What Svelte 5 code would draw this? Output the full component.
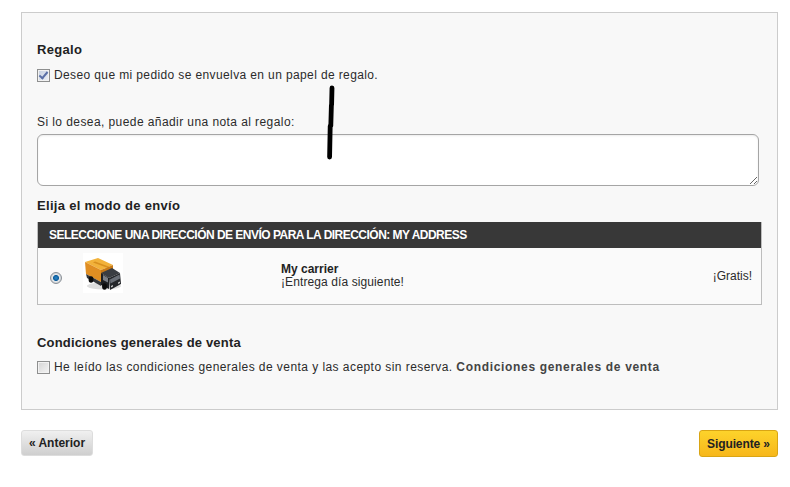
<script>
  const carrier = { name: 'My carrier', delay: '¡Entrega día siguiente!', price: '¡Gratis!' };
</script>

<div class="page">
  <div class="box">
    <h3 class="first">Regalo</h3>
    <label class="check">
      <input type="checkbox" checked />
      <span>Deseo que mi pedido se envuelva en un papel de regalo.</span>
    </label>

    <p class="note-label">Si lo desea, puede añadir una nota al regalo:</p>
    <textarea class="note"></textarea>

    <h3 class="mode">Elija el modo de envío</h3>
    <div class="carrier-table">
      <div class="carrier-head">SELECCIONE UNA DIRECCIÓN DE ENVÍO PARA LA DIRECCIÓN: MY ADDRESS</div>
      <div class="carrier-row">
        <input class="radio" type="radio" checked />
        <div class="truck">
          <svg width="40" height="40" viewBox="0 0 40 40">
            <rect width="40" height="40" fill="#fff" />
            <ellipse cx="21" cy="33" rx="17" ry="3.5" fill="#ddd" />
            <!-- caja -->
            <path d="M2 9 L15 5 L30 12 L18 17 Z" fill="#f2b23a" />
            <path d="M2 9 L18 17 L18 29 L3 21 Z" fill="#e08e22" />
            <path d="M10 9.5 L12 8.5 L27 14 L25 15 Z" fill="#d8901f" />
            <path d="M18 17 L30 12 L30 17 L18 22 Z" fill="#c87a18" />
            <!-- chasis -->
            <path d="M3 21 L18 29 L18 33 L4 25 Z" fill="#33363a" />
            <!-- cabina -->
            <path d="M18 20 L29 15 L37 20 L26 25 Z" fill="#3a3d42" />
            <path d="M18 20 L26 25 L26 36 L18 32 Z" fill="#1d1f22" />
            <path d="M26 25 L37 20 L38 31 L27 37 Z" fill="#25272b" />
            <path d="M27 26.5 L36.5 21.5 L37 25.5 L27.5 30.5 Z" fill="#6b7078" />
            <path d="M20 22 L25 25 L25 29.5 L20 27 Z" fill="#7a7f87" />
            <path d="M28 33 L30 32 L30 33.5 L28 34.5 Z M35 29.5 L37 28.5 L37 30 L35 31 Z" fill="#c9c9c9" />
            <ellipse cx="8" cy="26.5" rx="2.4" ry="3.2" fill="#0c0c0c" />
            <ellipse cx="21.5" cy="33.5" rx="2.4" ry="3.2" fill="#0c0c0c" />
          </svg>
        </div>
        <div class="carrier-info">
          <strong>{carrier.name}</strong>
          <span>{carrier.delay}</span>
        </div>
        <div class="price">{carrier.price}</div>
      </div>
    </div>

    <h3 class="terms">Condiciones generales de venta</h3>
    <label class="check">
      <input type="checkbox" />
      <span class="accept">He leído las condiciones generales de venta y las acepto sin reserva. <b>Condiciones generales de venta</b></span>
    </label>
  </div>

  <div class="nav">
    <button class="btn btn--prev">« Anterior</button>
    <button class="btn btn--next">Siguiente »</button>
  </div>

  <!-- trazo hecho a mano encima de la captura -->
  <svg class="scribble" width="12" height="78" viewBox="0 0 12 78">
    <path d="M7 3 L6.6 20 M6.4 20 L5.8 41 M5.2 41 L4.6 72" fill="none" stroke="#000" stroke-width="4.8" stroke-linecap="round" />
  </svg>
</div>

<style>
  :global(body) {
    margin: 0;
    background: #fff;
  }
  .page {
    position: relative;
    width: 790px;
    height: 487px;
    box-sizing: border-box;
    padding: 12px 12px 0 21px;
    font-family: "Liberation Sans", Arial, sans-serif;
    font-size: 12px;
    color: #2b2b2b;
    overflow: hidden;
  }
  .box {
    box-sizing: border-box;
    height: 398px;
    padding: 29px 15px 0 15px;
    background: #f8f8f8;
    border: 1px solid #ccc;
  }
  h3 {
    margin: 0;
    font-size: 13px;
    line-height: 15px;
    font-weight: bold;
    color: #222;
  }
  .first {
    letter-spacing: 0.3px;
  }
  .check {
    display: flex;
    align-items: center;
    gap: 4px;
    letter-spacing: 0.38px;
    line-height: 16px;
  }
  .check input {
    appearance: none;
    position: relative;
    box-sizing: border-box;
    width: 13px;
    height: 13px;
    margin: 0;
    background: linear-gradient(135deg, #d4d4d4, #f4f4f4);
    border: 1px solid #8e8f8f;
    outline: 1px solid #f2f2f2;
    outline-offset: -2px;
  }
  .check input:checked {
    background: linear-gradient(135deg, #c3cee0, #eef1f6);
  }
  .check input:checked::after {
    content: '';
    position: absolute;
    left: 3px;
    top: 0;
    width: 3px;
    height: 7px;
    border: solid #5a6fa6;
    border-width: 0 2px 2px 0;
    transform: rotate(40deg);
  }
  .accept {
    letter-spacing: 0.44px;
  }
  .check b {
    color: #444;
    letter-spacing: 0.67px;
  }
  .first + .check {
    margin-top: 10px;
  }
  .note-label {
    margin: 31px 0 0;
    line-height: 16px;
    letter-spacing: 0.42px;
  }
  .note {
    display: block;
    box-sizing: border-box;
    width: 722px;
    height: 52px;
    margin-top: 4px;
    background: #fff;
    border: 1px solid #a5a5a5;
    border-radius: 6px;
    box-shadow: inset 0 1px 2px rgba(0, 0, 0, 0.08);
  }
  .mode {
    margin-top: 12px;
    letter-spacing: 0.3px;
  }
  .carrier-table {
    width: 725px;
    margin-top: 9px;
    border: 1px solid #bdbdbd;
    border-top: 0;
    box-sizing: border-box;
  }
  .carrier-head {
    height: 26px;
    padding-left: 11px;
    background: #383838;
    color: #fff;
    font-weight: bold;
    font-size: 12px;
    line-height: 26px;
    letter-spacing: -0.52px;
    white-space: nowrap;
  }
  .carrier-row {
    display: flex;
    align-items: center;
    height: 56px;
    background: #fafafa;
  }
  .radio {
    appearance: none;
    box-sizing: border-box;
    width: 12px;
    height: 12px;
    margin: 3px 0 0 12px;
    border-radius: 50%;
    border: 1px solid #8a8f96;
    background: radial-gradient(circle at 50% 50%, #2a86c8 0, #0f5f9e 2.6px, #e6e8ea 3.4px, #cfd3d7 5px);
  }
  .truck {
    display: flex;
    margin-left: 21px;
    width: 40px;
    height: 40px;
    margin-top: -6px;
  }
  .carrier-info {
    display: flex;
    flex-direction: column;
    margin-left: 158px;
    flex: 1;
    line-height: 13px;
  }
  .carrier-info strong {
    color: #222;
  }
  .carrier-info span {
    letter-spacing: 0.1px;
  }
  .price {
    padding-right: 9px;
  }
  .terms {
    margin-top: 30px;
    letter-spacing: 0.17px;
  }
  .terms + .check {
    margin-top: 9px;
  }
  .nav {
    display: flex;
    justify-content: space-between;
    margin-top: 20px;
  }
  .btn {
    height: 26px;
    padding: 0;
    font-family: inherit;
    font-size: 12px;
    font-weight: bold;
    color: #222;
    background: linear-gradient(180deg, #f0f0f0, #cfcfcf);
    border: 1px solid #ddd;
    border-radius: 3px;
  }
  .btn--prev {
    width: 72px;
  }
  .btn--next {
    width: 79px;
    height: 27px;
    letter-spacing: -0.1px;
    background: linear-gradient(180deg, #fdd32b, #f7b71b);
    border-color: #d9a514;
  }
  .scribble {
    position: absolute;
    left: 325px;
    top: 85px;
  }
</style>
